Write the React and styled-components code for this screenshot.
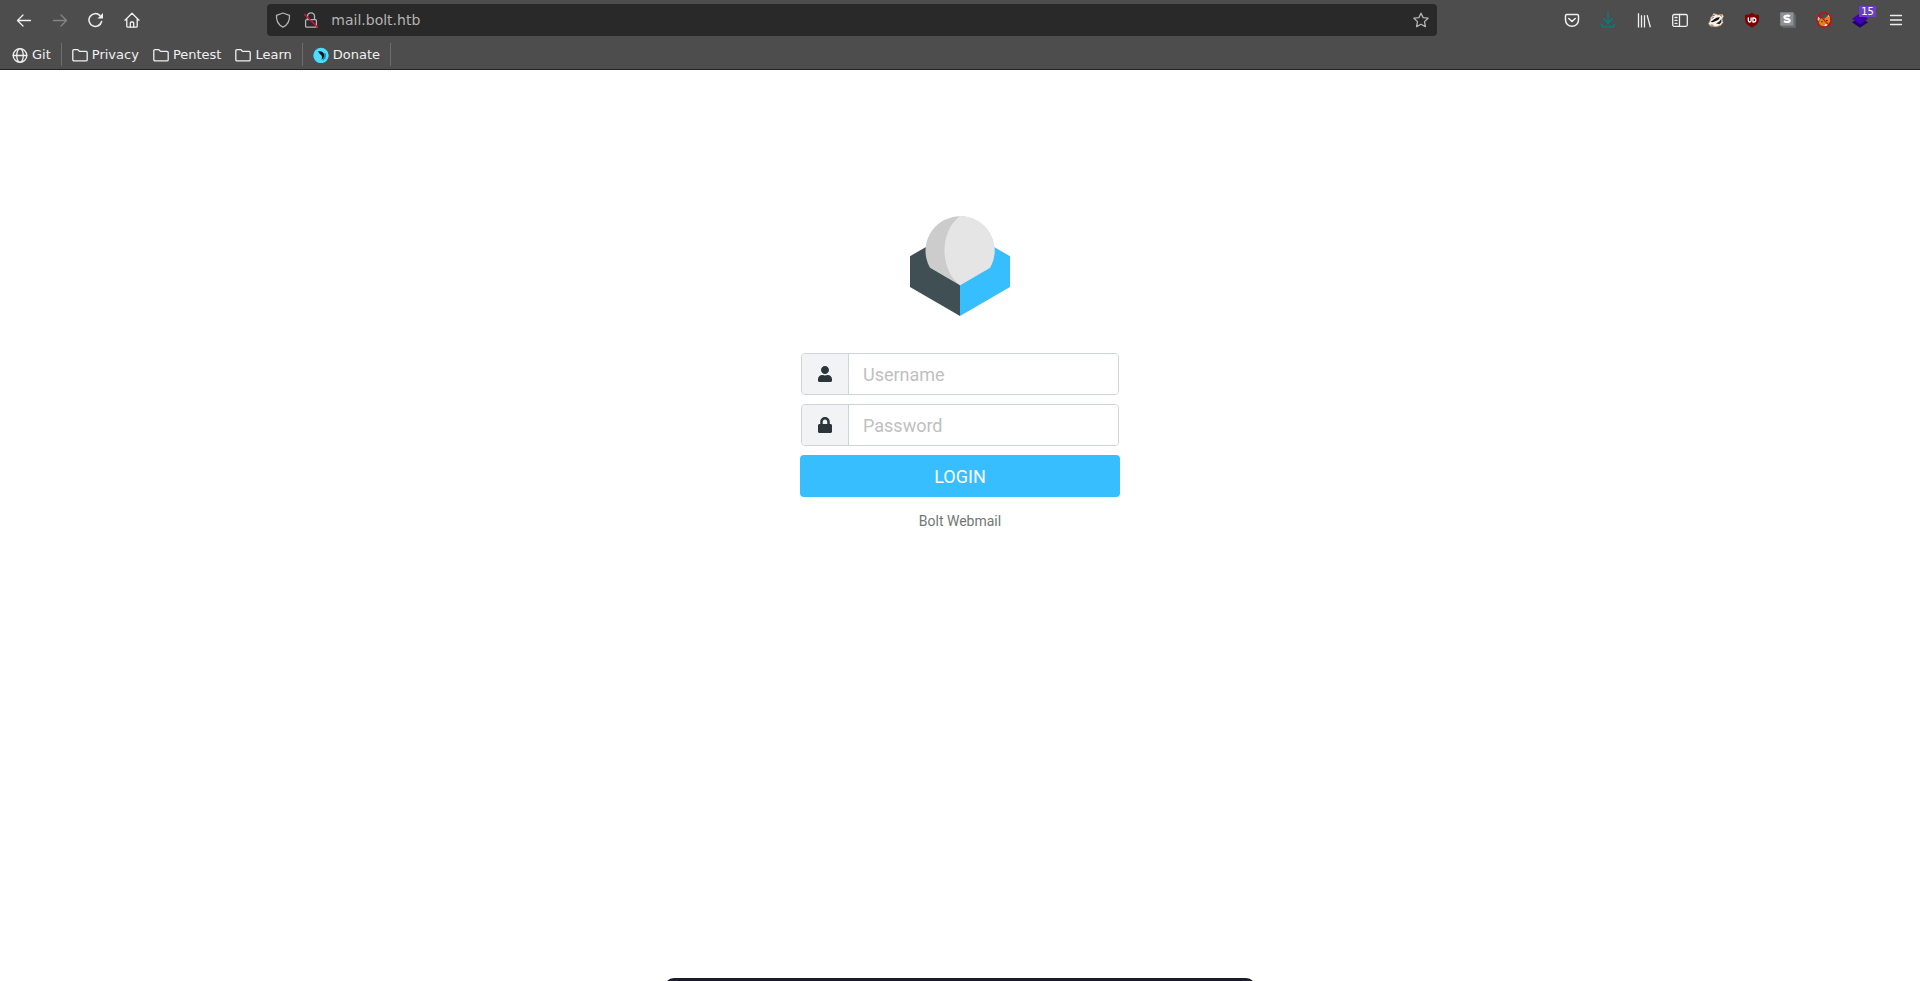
import React from "react";
import styled, { createGlobalStyle } from "styled-components";
import { FaUser, FaLock } from "react-icons/fa";

const GlobalStyle = createGlobalStyle`
  * {
    box-sizing: border-box;
  }
  body {
    margin: 0;
    background: #fff;
    font-family: Roboto, sans-serif;
  }
`;

/* ---------- browser chrome ---------- */

const Chrome = styled.header`
  background: #4d4d4d;
  border-bottom: 1px solid #232323;
  font-family: "DejaVu Sans", sans-serif;
`;

const NavBar = styled.nav`
  display: flex;
  align-items: center;
  height: 40px;
  padding: 0 6px;
`;

const Spring = styled.div`
  flex: 1;
  padding-left: 2px;
`;

const ToolButton = styled.button`
  position: relative;
  display: flex;
  align-items: center;
  justify-content: center;
  width: 36px;
  height: 32px;
  padding: 0;
  border: 0;
  background: none;
  color: ${(props) => props.$color || "#f0f0f0"};
`;

const Badge = styled.span`
  position: absolute;
  top: 2px;
  right: 2px;
  padding: 0 2px;
  background: #6a3fc4;
  color: #fff;
  font: 10px/11px "DejaVu Sans", sans-serif;
`;

const UrlBar = styled.div`
  flex: 10;
  display: flex;
  align-items: center;
  gap: 12px;
  height: 32px;
  padding: 0 8px;
  border-radius: 4px;
  background: #292929;
  color: #b4b4b4;
`;

const UrlInput = styled.input`
  flex: 1;
  min-width: 0;
  padding: 0;
  border: 0;
  outline: 0;
  background: none;
  color: #b4b4b4;
  font: 14px "DejaVu Sans", sans-serif;
`;

const Bookmarks = styled.nav`
  display: flex;
  align-items: center;
  height: 29px;
  padding: 0 5px;
`;

const Bookmark = styled.a`
  display: flex;
  align-items: center;
  gap: 4px;
  padding: 0 7px;
  color: #f0f0f0;
  font-size: 13px;
  line-height: 22px;
  text-decoration: none;
`;

const Divider = styled.span`
  width: 1px;
  height: 23px;
  margin: 0 3px;
  background: #6d6d6d;
`;

/* ---------- login page ---------- */

const LoginPage = styled.main`
  display: flex;
  flex-direction: column;
  align-items: center;
  padding: 146px 16px 0;
`;

const LoginForm = styled.form`
  display: flex;
  flex-direction: column;
  gap: 9px;
  width: 100%;
  max-width: 320px;
  margin-top: 37px;
`;

const InputGroup = styled.div`
  display: flex;
  height: 42px;
  margin: 0 1px;
  border: 1px solid #ced4da;
  border-radius: 4px;
  overflow: hidden;
`;

const Addon = styled.label`
  display: flex;
  align-items: center;
  justify-content: center;
  width: 47px;
  border-right: 1px solid #ced4da;
  background: #f1f3f5;
  color: #2c363a;
  font-size: 16px;
`;

const TextInput = styled.input`
  flex: 1;
  min-width: 0;
  padding: 0 14px;
  border: 0;
  outline: 0;
  background: #fff;
  color: #2c363a;
  font: 18px Roboto, sans-serif;

  &::placeholder {
    color: #bfbfbf;
    opacity: 1;
  }
`;

const LoginButton = styled.button`
  height: 42px;
  border: 0;
  border-radius: 4px;
  background: #37beff;
  color: #fff;
  font: 18px Roboto, sans-serif;
  text-transform: uppercase;
`;

const ProductName = styled.p`
  margin: 14px 0 0;
  color: #737677;
  font-size: 14px;
  line-height: 20px;
`;

// top edge of the desktop dock that peeks over the window
const Dock = styled.div`
  position: fixed;
  bottom: -9px;
  left: 50%;
  width: 592px;
  height: 12px;
  transform: translateX(-50%);
  border-radius: 10px 10px 0 0;
  background: #1b1b2a;
`;

/* ---------- icons ---------- */

function Icon({ children, size = 16 }) {
  return (
    <svg
      width={size}
      height={size}
      viewBox="0 0 16 16"
      fill="none"
      stroke="currentColor"
      strokeWidth="1.3"
      strokeLinecap="round"
      strokeLinejoin="round"
      aria-hidden="true"
    >
      {children}
    </svg>
  );
}

const BackIcon = () => (
  <Icon>
    <path d="M14.5 8.5H1.5M7 3 1.5 8.5 7 14" />
  </Icon>
);

const ForwardIcon = () => (
  <Icon>
    <path d="M1.5 8.5h13M9 3l5.5 5.5L9 14" />
  </Icon>
);

const ReloadIcon = () => (
  <Icon>
    <path d="M13.6 9.5A6.4 6.4 0 1 1 11.8 3.4" strokeWidth="1.5" />
    <path d="M15 1v5.5H9.5z" fill="currentColor" stroke="none" />
  </Icon>
);

const HomeIcon = () => (
  <Icon>
    <path d="M1 8.3 8 1.3l7 7M2.8 7v7.2c0 .6.4 1 1 1h8.4c.6 0 1-.4 1-1V7" />
    <path d="M6.3 15v-4c0-.6.4-1 1-1h1.4c.6 0 1 .4 1 1v4" />
  </Icon>
);

const ShieldIcon = () => (
  <Icon>
    <path d="M8 1 14.5 3.3C14.9 9 12.4 13 8 15.2 3.6 13 1.1 9 1.5 3.3z" />
  </Icon>
);

const InsecureIcon = () => (
  <Icon>
    <path d="M4.5 7V4.3a3.5 3.5 0 0 1 7 0V7M3.6 7.6h8.8c.6 0 1 .4 1 1v5.6c0 .6-.4 1-1 1H3.6c-.6 0-1-.4-1-1V8.6c0-.6.4-1 1-1z" />
    <path d="M1.6 2.4 14.6 15.2" stroke="#e4103c" strokeWidth="1.4" />
  </Icon>
);

const StarIcon = () => (
  <Icon>
    <path d="m8 1.2 2.1 4.4 5 .6-3.600 3.400.9 5L8 12.200l-4.400 2.400.9-5L.9 6.200l5-.6z" />
  </Icon>
);

const PocketIcon = () => (
  <Icon>
    <path
      d="M2.7 2.5h10.6c.8 0 1.2.5 1.2 1.2V8a6.5 6.3 0 0 1-13 0V3.7c0-.7.4-1.2 1.2-1.2z"
      strokeWidth="1.5"
    />
    <path d="M4.8 6.5 8 9.5l3.2-3" strokeWidth="1.6" />
  </Icon>
);

const DownloadIcon = () => (
  <Icon>
    <path d="M8 1v10M3.6 6.8 8 11.2l4.4-4.4M1.8 12.5v.9c0 .9.6 1.4 1.4 1.4h9.6c.8 0 1.4-.5 1.4-1.4v-.9" />
  </Icon>
);

const LibraryIcon = () => (
  <Icon>
    <path d="M2.5 1.8v13M5.5 4v10.8M8.5 4v10.8M11.3 3.8l2.9 10.8" strokeLinecap="square" />
  </Icon>
);

const SidebarIcon = () => (
  <Icon>
    <rect x="0.7" y="2.5" width="14.6" height="11.8" rx="1.5" />
    <path d="M7.5 2.5v11.8M3 5.5h2M3 8.400h2M3 11.3h2" />
  </Icon>
);

const BadgerIcon = () => (
  <Icon>
    <path
      d="M.6 11.500 2.500 8 2.800 5.500 4.600 4 5.500 1.500 8 2.200 10 3l4.500-.5.9 2L14 7l1 3.500-2.500 3L8 14.800 2.500 14z"
      fill="#f6f1ea"
      stroke="#cf9468"
      strokeWidth="0.7"
    />
    <path d="M2.5 10 6.2 7.300 9 5.600l3-.4-1.500 2.300-2.500 1.600-3.500 1.200z" fill="#111" stroke="none" />
    <path d="m8 11.500 3.500-2.200L13.200 7l.3 3-2 2.300z" fill="#2a2826" stroke="none" />
    <path d="m5 3.700 1.500-.5M12.500 3.600l1.200.5M4 6.200l1.500-.8M3 13l2 .3" stroke="#55504b" strokeWidth="0.8" />
  </Icon>
);

const UblockIcon = () => (
  <Icon>
    <path d="M8 .8C10 2.3 12.4 3 15 3v4.5c0 3.8-3 6-7 8-4-2-7-4.2-7-8V3c2.6 0 5-.7 7-2.2z" fill="#800000" stroke="none" />
    <path d="M4.3 6v2.6a1.4 1.4 0 0 0 2.8 0V6" stroke="#fff" />
    <path d="M8.9 6h.9a2 2 0 0 1 0 4h-.9z" stroke="#fff" />
  </Icon>
);

const StylusIcon = () => (
  <Icon>
    <path d="M13.2.5 15.7 3v12.7H3L.3 13.2z" fill="#686c70" stroke="none" />
    <rect x="0.2" y="0.3" width="13.2" height="13.2" fill="#8e9296" stroke="none" />
    <path
      d="M9.8 4.4C8.7 3.5 4.4 3.1 4.4 5.2c0 2.1 5.3 1 5.3 3.3 0 2.1-4.3 1.8-5.7.7"
      stroke="#fff"
      strokeWidth="2.1"
      strokeLinecap="butt"
    />
  </Icon>
);

const FoxBlockIcon = () => (
  <Icon>
    <path d="M1 3.500 4 6.500 2.800 9 1 7zM11 4.500 13 2l1.200 4z" fill="#c9c5c2" stroke="none" />
    <path d="M3.500 8 5.500 6l3 .8L11 4.300l3 1.200.2 4L12 12.500 8 14.300 4.500 13.500 3 11z" fill="#e58415" stroke="none" />
    <path d="M8 14.300 9.500 12l2.500.3-1.500 1.700z" fill="#e9e5e1" stroke="none" />
    <path d="M5.500 9.800h.8M10.500 8.500h.8" stroke="#3f2410" strokeWidth="1" />
    <circle cx="8" cy="8" r="7.3" stroke="#d40808" strokeWidth="1.2" />
    <path d="m2.900 2.900 10.200 10.200" stroke="#d40808" strokeWidth="1.2" />
  </Icon>
);

const LayersIcon = () => (
  <Icon>
    <path d="m0 10.2 8-4.8 8 4.8-8 5.5z" fill="#22006e" stroke="none" />
    <path d="M0 6.8 8 1.3l8 5.5-8 5.5z" fill="#4400b4" stroke="none" />
  </Icon>
);

const MenuIcon = () => (
  <Icon>
    <path d="M2.5 3.5h11M2.5 8h11M2.5 12.5h11" />
  </Icon>
);

const GlobeIcon = () => (
  <Icon>
    <circle cx="8" cy="8.5" r="6.8" />
    <ellipse cx="8" cy="8.5" rx="3.3" ry="6.8" />
    <path d="M1.2 8.5h13.6" />
  </Icon>
);

const FolderIcon = () => (
  <Icon>
    <path d="M.8 12.7V3.8c0-.7.5-1.2 1.2-1.2h3.6c.9 0 1.1 1.8 2.2 1.8H14c.7 0 1.2.5 1.2 1.2v7.1c0 .7-.5 1.2-1.2 1.2H2c-.7 0-1.2-.5-1.2-1.2z" />
  </Icon>
);

const DonateIcon = () => (
  <Icon>
    <circle cx="8" cy="8.5" r="7.7" fill="#4bdcff" stroke="none" />
    <path d="M8.5 6.5 11 8l-1.5 6 3-2.5.6-5z" fill="#168eaa" stroke="none" />
    <path d="M5 4.5c2.8-.8 6.2.5 6.1 3.9-.1 1.8-1.2 3.2-2.6 4.3.8-2.7.6-4-.8-5C6.6 6.8 6 5.5 5 4.5z" fill="#071318" stroke="none" />
  </Icon>
);

const Logo = () => (
  <svg width="100" height="100" viewBox="0 0 100 100" role="img" aria-label="Roundcube">
    <path d="M0 40.2 15.5 31.2 50 50v50L0 71z" fill="#404f54" />
    <path d="M100 40.2 84.5 31.2 50 50v50l50-29z" fill="#37beff" />
    <path d="M20 51.8A34.5 34.5 0 1 1 80 51.8L50 69.2z" fill="#ccc" />
    <path d="M50 0A34.5 34.5 0 0 1 80 51.8L50 69.2C29.3 53.5 29.3 15.5 50 0z" fill="#e5e5e5" />
  </svg>
);

/* ---------- data ---------- */

const navButtons = [
  { label: "Back", icon: <BackIcon /> },
  { label: "Forward", icon: <ForwardIcon />, color: "#858585" },
  { label: "Reload", icon: <ReloadIcon /> },
  { label: "Home", icon: <HomeIcon /> },
];

const extensions = [
  { label: "Save to Pocket", icon: <PocketIcon /> },
  { label: "Downloads", icon: <DownloadIcon />, color: "#008080" },
  { label: "Library", icon: <LibraryIcon /> },
  { label: "Sidebars", icon: <SidebarIcon /> },
  { label: "Privacy Badger", icon: <BadgerIcon /> },
  { label: "uBlock Origin", icon: <UblockIcon /> },
  { label: "Stylus", icon: <StylusIcon /> },
  { label: "FoxyProxy", icon: <FoxBlockIcon /> },
  { label: "Wappalyzer", icon: <LayersIcon />, badge: "15" },
  { label: "Menu", icon: <MenuIcon /> },
];

function ToolButtons({ items }) {
  return items.map(({ label, icon, color, badge }) => (
    <ToolButton key={label} type="button" aria-label={label} $color={color}>
      {icon}
      {badge && <Badge>{badge}</Badge>}
    </ToolButton>
  ));
}

function BrowserChrome() {
  return (
    <Chrome>
      <NavBar>
        <ToolButtons items={navButtons} />
        <Spring />
        <UrlBar>
          <ShieldIcon />
          <InsecureIcon />
          <UrlInput aria-label="Address" defaultValue="mail.bolt.htb" />
          <StarIcon />
        </UrlBar>
        <Spring />
        <ToolButtons items={extensions} />
      </NavBar>
      <Bookmarks>
        <Bookmark href="#git">
          <GlobeIcon />
          Git
        </Bookmark>
        <Divider />
        <Bookmark href="#privacy">
          <FolderIcon />
          Privacy
        </Bookmark>
        <Bookmark href="#pentest">
          <FolderIcon />
          Pentest
        </Bookmark>
        <Bookmark href="#learn">
          <FolderIcon />
          Learn
        </Bookmark>
        <Divider />
        <Bookmark href="#donate">
          <DonateIcon />
          Donate
        </Bookmark>
        <Divider />
      </Bookmarks>
    </Chrome>
  );
}

function Login() {
  return (
    <LoginPage>
      <Logo />
      <LoginForm onSubmit={(e) => e.preventDefault()}>
        <InputGroup>
          <Addon htmlFor="username" aria-label="Username">
            <FaUser />
          </Addon>
          <TextInput id="username" type="text" placeholder="Username" />
        </InputGroup>
        <InputGroup>
          <Addon htmlFor="password" aria-label="Password">
            <FaLock />
          </Addon>
          <TextInput id="password" type="password" placeholder="Password" />
        </InputGroup>
        <LoginButton type="submit">Login</LoginButton>
      </LoginForm>
      <ProductName>Bolt Webmail</ProductName>
    </LoginPage>
  );
}

function App() {
  return (
    <>
      <GlobalStyle />
      <BrowserChrome />
      <Login />
      <Dock />
    </>
  );
}

export default App;
